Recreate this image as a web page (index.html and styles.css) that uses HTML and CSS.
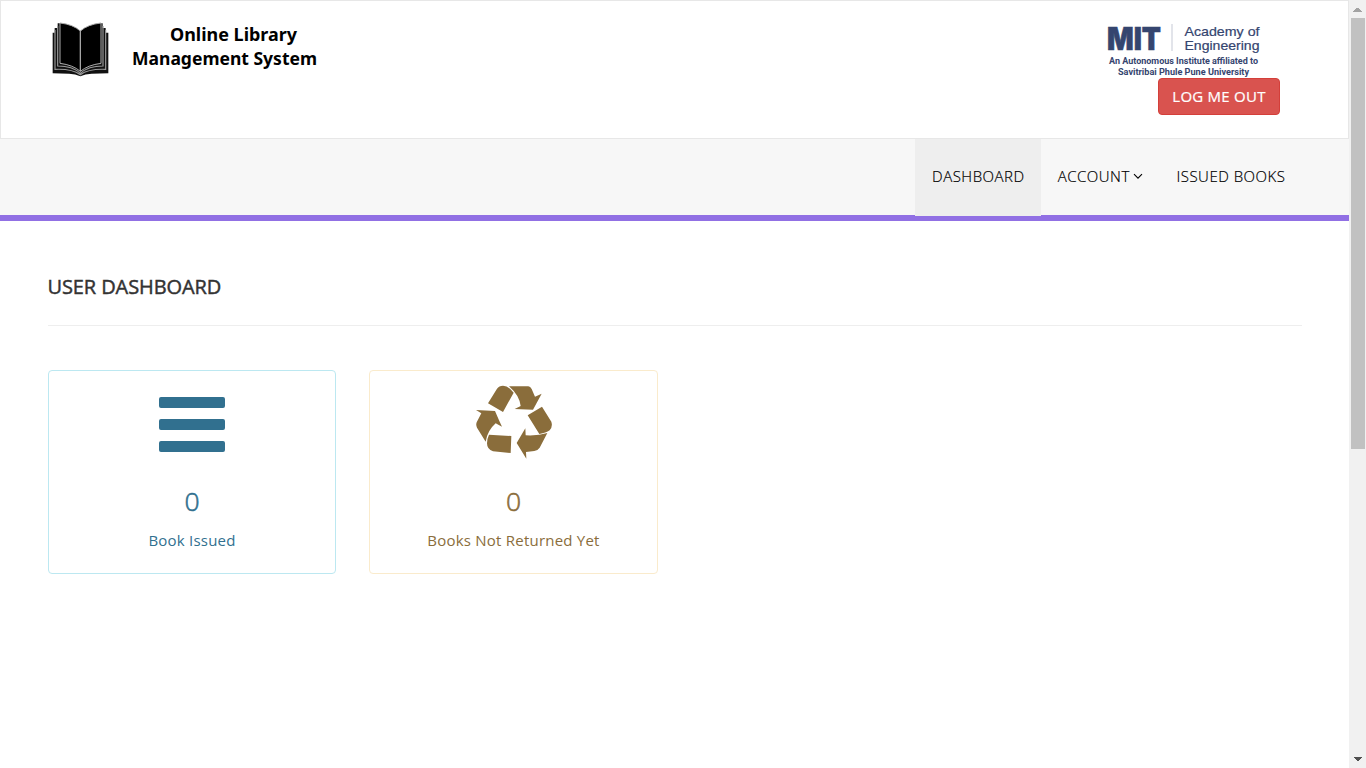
FILE: index.html
```html
<!DOCTYPE html>
<html lang="en">
<head>
<meta charset="utf-8">
<title>Online Library Management System</title>
<link rel="stylesheet" href="styles.css">
</head>
<body>
<div class="window">
  <div class="page">
    <header class="header">
      <div class="brand">
        <svg class="book" viewBox="0 0 210 186" aria-hidden="true">
          <path fill="#111" d="M20 44h6v-14h9V16h5l63 24 62-24h5v14h9v14h8v122l-50 1q-20 1-34 8-14-7-34-8l-49-1z"/>
          <path fill="none" stroke="#999" stroke-width="3.5" d="M27 36v118q52-2 76 16 24-18 76-16V36M35 24v120q45 0 68 22 24-22 68-22V24"/>
          <path fill="#000" stroke="#aaa" stroke-width="3" d="M42 15q39 4 61 24v121q-22-19-61-24zM165 15q-39 4-62 24v121q23-19 62-24z"/>
        </svg>
        <svg class="title" viewBox="0 0 190 54">
          <text x="38" y="23" textLength="127" lengthAdjust="spacingAndGlyphs">Online Library</text>
          <text x="0" y="47" textLength="185" lengthAdjust="spacingAndGlyphs">Management System</text>
        </svg>
      </div>
      <div class="side">
        <svg class="mit" viewBox="0 0 156 58">
          <text class="mit-name" x="1" y="29.5" textLength="54" lengthAdjust="spacingAndGlyphs">MIT</text>
          <path stroke="#d9dbe3" stroke-width="1.5" d="M66 4v27"/>
          <text class="mit-school" x="78.5" y="16" textLength="75" lengthAdjust="spacingAndGlyphs">Academy of</text>
          <text class="mit-school" x="78.5" y="29.5" textLength="75" lengthAdjust="spacingAndGlyphs">Engineering</text>
          <text class="mit-note" x="3" y="44" textLength="149" lengthAdjust="spacingAndGlyphs">An Autonomous Institute affiliated to</text>
          <text class="mit-note" x="12" y="55" textLength="131" lengthAdjust="spacingAndGlyphs">Savitribai Phule Pune University</text>
        </svg>
        <a class="logout">LOG ME OUT</a>
      </div>
    </header>
    <nav class="nav">
      <a class="tab active">DASHBOARD</a>
      <a class="tab">ACCOUNT<svg class="chevron" viewBox="0 0 10 7" aria-hidden="true"><path fill="none" stroke="#000" stroke-width="1.1" d="M1 1.2l4 4 4-4"/></svg></a>
      <a class="tab">ISSUED BOOKS</a>
    </nav>
    <main class="content">
      <h4 class="heading">USER DASHBOARD</h4>
      <div class="cards">
        <section class="card info">
          <svg class="icon" viewBox="0 0 80 80" aria-hidden="true"><path fill="currentColor" d="M9 12h62q2 0 2 2v7q0 2-2 2H9q-2 0-2-2v-7q0-2 2-2zM9 34h62q2 0 2 2v7q0 2-2 2H9q-2 0-2-2v-7q0-2 2-2zM9 56h62q2 0 2 2v7q0 2-2 2H9q-2 0-2-2v-7q0-2 2-2z"/></svg>
          <h3 class="count">0</h3>
          <p class="label">Book Issued</p>
        </section>
        <section class="card warning">
          <svg class="icon" viewBox="342 75 240 240" aria-hidden="true"><path fill="currentColor" d="M384 130L411 86Q417 77 429 77 446 78 461 98L429 156ZM447 79H505Q511 80 515 87L525 110 545 101 519 149 464 147 482 138Q478 106 447 79ZM503 166L546 140 574 185Q579 200 569 211 558 219 538 222ZM470 249L496 205 497 226Q535 228 562 219L539 263Q533 272 523 273L498 276 499 296ZM387 224L454 228 452 279 399 274Q381 268 381 250 381 236 387 224ZM348 150L405 153 417 181 426 200 407 190Q382 212 377 245L351 203Q347 195 350 187L364 160Z"/></svg>
          <h3 class="count">0</h3>
          <p class="label">Books Not Returned Yet</p>
        </section>
      </div>
    </main>
  </div>
  <div class="scrollbar">
    <svg class="arrow" viewBox="0 0 17 17" aria-hidden="true"><path fill="#a3a3a3" d="M4 12v-1h1v-1h1V9h1V8h3v1h1v1h1v1h1v1z"/></svg>
    <div class="thumb"></div>
    <svg class="arrow down" viewBox="0 0 17 17" aria-hidden="true"><path fill="#505050" d="M5 6h8v1h-1v1h-1v1h-1v1H8V9H7V8H6V7H5z"/></svg>
  </div>
</div>
</body>
</html>
```
FILE: styles.css
```css
* { box-sizing: border-box; }
body { margin: 0; overflow: hidden; background: #fff; font-family: "Open Sans", sans-serif; font-size: 15px; color: #333; }
.window { display: flex; width: 1366px; height: 768px; }
.page { width: 1349px; }
.header { display: flex; justify-content: space-between; height: 139px; border: 1px solid #e7e7e7; padding: 19px 68px 0 45px; }
.brand { display: flex; align-items: flex-start; }
.book { width: 70px; height: 62px; margin-top: -2px; }
.title { width: 190px; height: 54px; margin: -2px 0 0 16px; font-family: "Noto Sans", sans-serif; font-size: 18px; font-weight: 700; fill: #000; }
.side { display: flex; flex-direction: column; width: 174px; }
.mit { width: 156px; height: 58px; fill: #35456f; }
.mit-name { font: 900 31px Inter, sans-serif; stroke: #35456f; stroke-width: .6px; }
.mit-school { font: 13px "Liberation Sans", sans-serif; stroke: #35456f; stroke-width: .2px; }
.mit-note { font: 700 8.5px Roboto, sans-serif; }
.logout { align-self: flex-end; width: 122px; height: 37px; border: 1px solid #d43f3a; border-radius: 4px; background: #d9534f; color: #fff; line-height: 35px; text-align: center; letter-spacing: .25px; -webkit-text-stroke: .2px; }
.nav { display: flex; justify-content: flex-end; height: 82px; padding-right: 47px; background: #f7f7f7; border-bottom: 6px solid #9170e4; }
.tab { display: flex; align-items: center; height: 77px; padding: 0 16.6px 3px; color: #000; font-weight: 300; letter-spacing: .5px; white-space: nowrap; -webkit-text-stroke: .2px; }
.active { background: #eee; }
.chevron { width: 10px; height: 7px; margin-left: 3.5px; }
.content { padding: 52px 47px 0 48px; }
.heading { height: 53px; margin: 0 0 44px; border-bottom: 1px solid #eee; font-size: 20px; font-weight: 500; line-height: 28px; letter-spacing: -.1px; text-indent: -.5px; -webkit-text-stroke: .45px; }
.cards { display: flex; gap: 33px; }
.card { display: flex; flex-direction: column; align-items: center; width: 288px; height: 204px; padding-top: 14px; border: 1px solid; border-radius: 4px; }
.info { border-color: #bce8f1; color: #31708f; }
.warning { width: 289px; border-color: #faebcc; color: #8a6d3b; }
.icon { width: 80px; height: 80px; }
.count { margin: 18px 0 0; font-size: 26.5px; font-weight: 300; line-height: 36px; -webkit-text-stroke: .6px; }
.label { margin: 9px 0 0; line-height: 24px; letter-spacing: .22px; }
.scrollbar { display: flex; flex-direction: column; align-items: center; width: 17px; height: 768px; background: #f1f1f1; }
.arrow { flex: none; width: 17px; height: 17px; }
.thumb { width: 14px; height: 431px; margin-top: 1px; background: #c1c1c1; }
.down { margin-top: auto; }
```
